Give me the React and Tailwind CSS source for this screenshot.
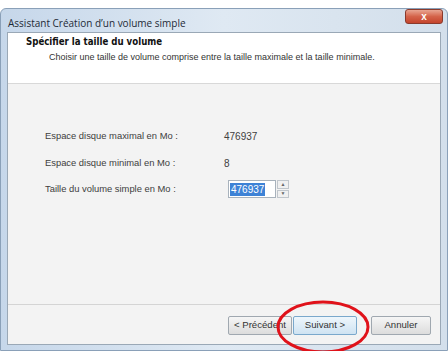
import React from "react";

export default function App() {
  return (
    <div className="w-[448px] h-[351px] bg-white overflow-hidden relative" style={{ fontFamily: '"Liberation Sans", Arial, sans-serif' }}>
      <div className="mt-[8px] h-[343px] flex flex-col rounded-tl-[6px] rounded-tr-[6px] border border-[#8aa0b8] bg-gradient-to-r from-[#c6d7ea] via-[#dfe9f3] to-[#d3dfeb]">
        {/* Title bar */}
        <div className="h-[23px] flex items-start justify-between pl-[7px] pr-[4px]">
          <span className="mt-[9px] text-[10px] text-[#1e2a36] leading-none" style={{ fontFamily: '"Open Sans", "Noto Sans", sans-serif' }}>
            Assistant Création d’un volume simple
          </span>
          <div className="w-[38px] h-[15px] rounded-[3px] border border-[#8a3a2c] bg-gradient-to-b from-[#e8a592] via-[#d4634a] to-[#c4442c] flex items-center justify-center">
            <span className="text-white text-[10px] font-bold leading-none">x</span>
          </div>
        </div>
        {/* Inner panel */}
        <div className="mx-[6px] flex-1 flex flex-col border border-[#9aa8b6] bg-[#f3f3f3]">
          <div className="h-[51px] bg-white border-b border-[#d8d8d8] pt-[2px]">
            <div className="pl-[18px] text-[9.6px] font-bold text-[#111] leading-[14px]" style={{ fontFamily: '"DejaVu Sans Condensed", "DejaVu Sans", sans-serif' }}>
              Spécifier la taille du volume
            </div>
            <div className="pl-[41px] mt-[2px] text-[9px] text-[#333] leading-[13px]">
              Choisir une taille de volume comprise entre la taille maximale et la taille minimale.
            </div>
          </div>
          <div className="flex-1 pt-[43px] pl-[37px] text-[9.4px] text-[#404040]">
            <div className="flex items-center h-[18px]">
              <span className="w-[179px]">Espace disque maximal en Mo :</span>
              <span className="text-[10px]">476937</span>
            </div>
            <div className="flex items-center h-[18px] mt-[9px]">
              <span className="w-[179px]">Espace disque minimal en Mo :</span>
              <span className="text-[10px]">8</span>
            </div>
            <div className="flex items-center h-[18px] mt-[8px]">
              <span className="w-[183px]">Taille du volume simple en Mo :</span>
              <div className="w-[48px] h-[18px] border border-[#a8b2bc] bg-white flex items-center pl-[1px]">
                <span className="bg-[#3d82d6] text-white text-[10px] px-[1px] leading-[13px]">476937</span>
              </div>
              <div className="w-[12px] h-[18px] ml-[1px] flex flex-col gap-[1px]">
                <div className="flex-1 border border-[#c0c6cc] bg-[#f0f0f0] text-[5px] text-[#666] flex items-center justify-center leading-none">▲</div>
                <div className="flex-1 border border-[#c0c6cc] bg-[#f0f0f0] text-[5px] text-[#666] flex items-center justify-center leading-none">▼</div>
              </div>
            </div>
          </div>
          <div className="h-[40px] border-t border-[#d4d4d4] flex items-start pt-[11px] pl-[220px] text-[9.6px] text-[#333]">
            <div className="w-[64px] h-[19px] border border-[#a0a8b0] rounded-[2px] bg-gradient-to-b from-[#f6f6f6] to-[#dcdcdc] flex items-center justify-center">&lt; Précédent</div>
            <div className="w-[64px] h-[19px] ml-[1px] border border-[#7aa8cc] rounded-[2px] bg-gradient-to-b from-[#eef6fc] to-[#cfe3f2] flex items-center justify-center">Suivant &gt;</div>
            <div className="w-[60px] h-[19px] ml-[14px] border border-[#a0a8b0] rounded-[2px] bg-gradient-to-b from-[#f6f6f6] to-[#dcdcdc] flex items-center justify-center">Annuler</div>
          </div>
        </div>
        <div className="h-[5px]" />
      </div>
      <svg className="absolute left-0 top-0" width="448" height="351" viewBox="0 0 448 351">
        <ellipse cx="323" cy="327" rx="45" ry="25" fill="none" stroke="#e0121a" strokeWidth="3" />
      </svg>
    </div>
  );
}
